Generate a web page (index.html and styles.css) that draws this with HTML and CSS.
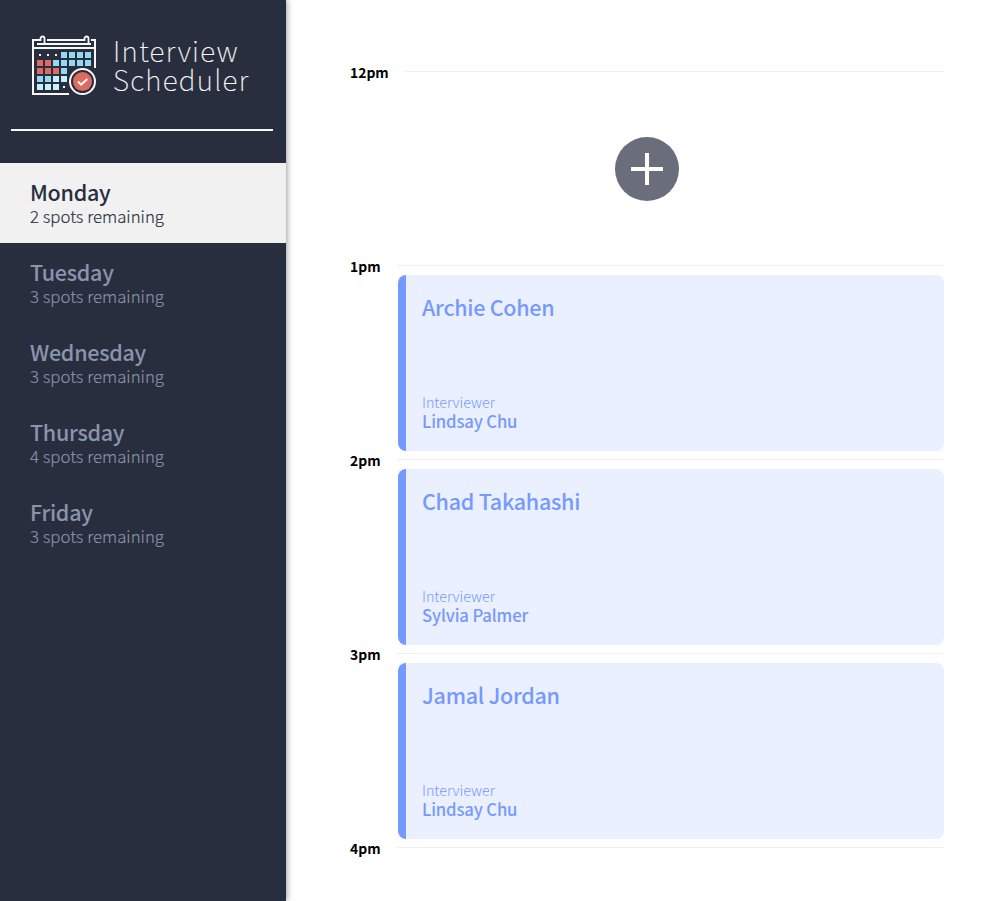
FILE: index.html
```html
<!DOCTYPE html>
<html lang="en">
<head>
<meta charset="utf-8">
<title>Interview Scheduler</title>
<link rel="stylesheet" href="styles.css">
</head>
<body>
<div class="layout">
  <aside class="sidebar">
    <div class="logo">
      <svg class="logo-icon" width="66" height="62" viewBox="0 0 66 62" fill="none">
        <g stroke="#f8f8f8" stroke-width="2">
          <path d="M10 6H2V60H38M16 6H53M60 6H64V34M6 10H60M2 14H64"/>
          <path stroke-width="1.800" d="M9.500 7V4.500a2 2 0 0 1 4 0V10M53.500 7V4.500a2 2 0 0 1 4 0V10"/>
        </g>
        <path fill="#f8f8f8" d="M8 20h2v2h-2zM16 20h2v2h-2zM24 20h2v2h-2zM32 52h2v2h-2z"/>
        <path fill="#94d9f2" d="M30 18h6v6h-6zM38 18h6v6h-6zM46 18h6v6h-6zM54 18h6v6h-6zM22 26h6v6h-6zM30 26h6v6h-6zM38 26h6v6h-6zM46 26h6v6h-6zM54 26h6v6h-6zM30 34h6v6h-6zM6 42h6v6h-6zM14 42h6v6h-6z"/>
        <path fill="#de6b61" d="M6 26h6v6h-6zM14 26h6v6h-6zM6 34h6v6h-6zM14 34h6v6h-6zM22 34h6v6h-6z"/>
        <path fill="#c6f0fc" d="M22 42h6v6h-6zM30 42h6v6h-6zM6 50h6v6h-6zM14 50h6v6h-6zM22 50h6v6h-6z"/>
        <circle cx="51.500" cy="47.500" r="12.500" fill="#282e3e" stroke="#f8f8f8" stroke-width="2"/>
        <circle cx="51.500" cy="47.500" r="9.500" fill="#de6b61"/>
        <path d="M47 47.500L50.200 50.700L56.300 45" stroke="#fff" stroke-width="2"/>
      </svg>
      <div class="logo-text"><div class="logo-top">Interview</div><div class="logo-bottom">Scheduler</div></div>
    </div>
    <hr class="separator">
    <ul class="days">
      <li class="day day-selected"><h2 class="day-name">Monday</h2><p class="spots">2 spots remaining</p></li>
      <li class="day"><h2 class="day-name">Tuesday</h2><p class="spots">3 spots remaining</p></li>
      <li class="day"><h2 class="day-name">Wednesday</h2><p class="spots">3 spots remaining</p></li>
      <li class="day"><h2 class="day-name">Thursday</h2><p class="spots">4 spots remaining</p></li>
      <li class="day"><h2 class="day-name">Friday</h2><p class="spots">3 spots remaining</p></li>
    </ul>
  </aside>
  <main class="schedule">
    <section class="slot">
      <header class="slot-head"><h4 class="time">12pm</h4><span class="rule"></span></header>
      <div class="empty">
        <svg class="add" width="64" height="64" viewBox="0 0 64 64"><circle cx="32" cy="32" r="32" fill="#696e7a"/><path fill="#fff" d="M30 16h4v14h14v4H34v14h-4V34H16v-4h14z"/></svg>
      </div>
    </section>
    <section class="slot">
      <header class="slot-head"><h4 class="time">1pm</h4><span class="rule"></span></header>
      <article class="card"><h2 class="student">Archie Cohen</h2><div><h4 class="role">Interviewer</h4><h3 class="interviewer">Lindsay Chu</h3></div></article>
    </section>
    <section class="slot">
      <header class="slot-head"><h4 class="time">2pm</h4><span class="rule"></span></header>
      <article class="card"><h2 class="student">Chad Takahashi</h2><div><h4 class="role">Interviewer</h4><h3 class="interviewer">Sylvia Palmer</h3></div></article>
    </section>
    <section class="slot">
      <header class="slot-head"><h4 class="time">3pm</h4><span class="rule"></span></header>
      <article class="card"><h2 class="student">Jamal Jordan</h2><div><h4 class="role">Interviewer</h4><h3 class="interviewer">Lindsay Chu</h3></div></article>
    </section>
    <section class="slot slot-last">
      <header class="slot-head"><h4 class="time">4pm</h4><span class="rule"></span></header>
    </section>
  </main>
</div>
</body>
</html>
```
FILE: styles.css
```css
* { box-sizing: border-box; }
body, h2, h3, h4, p, ul { margin: 0; padding: 0; }
body { font-family: "Noto Sans CJK JP", "Noto Sans", sans-serif; background: #fff; }
.layout { display: flex; height: 901px; }
.sidebar { width: 286px; flex: none; background: #282e3e; box-shadow: 1px 0 6px rgba(0, 0, 0, 0.4); }
.logo { display: flex; height: 129px; padding: 34px 0 0 31px; }
.logo-icon { flex: none; }
.logo-text { margin: 2px 0 0 16px; color: #f8f8f8; font-size: 28px; line-height: 29px; font-weight: 100; white-space: nowrap; -webkit-text-stroke: 0.2px #f8f8f8; }
.logo-top { letter-spacing: 1.35px; }
.logo-bottom { letter-spacing: 1.3px; }
.separator { height: 2px; margin: 0 13px 32px 11px; border: 0; background: #f8f8f8; }
.days { list-style: none; }
.day { height: 80px; padding: 17px 30px 0; color: #8a94ad; }
.day-selected { background: #f1f1f1; color: #282e3e; }
.day-name { font-size: 21.5px; line-height: 24px; font-weight: 500; letter-spacing: -0.27px; }
.spots { font-size: 16.8px; line-height: 24px; font-weight: 300; -webkit-text-stroke: 0.15px currentColor; }
.schedule { flex: 1; padding: 62px 64px 0; }
.slot { height: 194px; }
.slot-last { height: 20px; }
.slot-head { display: flex; height: 19px; gap: 16px; }
.time { font-size: 13.9px; line-height: 20px; font-weight: 700; color: #000; }
.rule { flex: 1; height: 1px; margin-top: 9px; background: #f1f1f1; }
.empty { display: flex; height: 175px; margin-left: 48px; padding: 56px 0 0 217px; }
.card { display: flex; flex-direction: column; justify-content: space-between; height: 176px; margin-left: 48px; padding: 17px 16px 20px; border-left: 8px solid #7699ff; border-radius: 8px; background: #eaf0ff; color: #7699ff; }
.student { font-size: 21.500px; line-height: 30px; font-weight: 500; letter-spacing: -0.27px; }
.role { font-size: 14.300px; line-height: 18px; font-weight: 300; }
.interviewer { font-size: 16.7px; line-height: 20px; font-weight: 500; letter-spacing: -0.15px; }
```
